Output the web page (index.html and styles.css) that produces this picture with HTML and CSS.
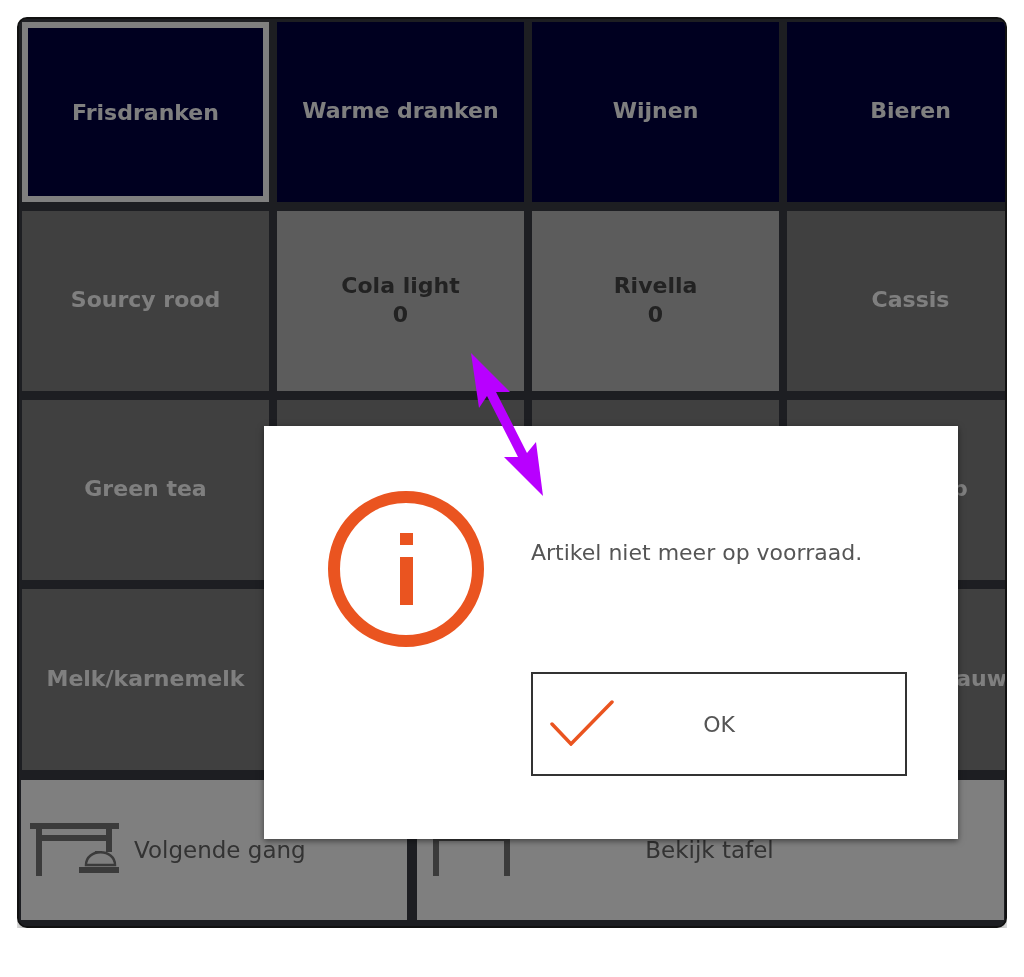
FILE: index.html
```html
<!DOCTYPE html>
<html lang="nl">
<head>
    <meta charset="UTF-8">
    <title>Kassa</title>
    <link rel="stylesheet" href="styles.css">
</head>
<body>
    <div class="frame">
        <div class="grid">
            <div class="cell category selected">Frisdranken</div>
            <div class="cell category">Warme dranken</div>
            <div class="cell category">Wijnen</div>
            <div class="cell category">Bieren</div>

            <div class="cell">Sourcy rood</div>
            <div class="cell active">Cola light<br>0</div>
            <div class="cell active">Rivella<br>0</div>
            <div class="cell">Cassis</div>

            <div class="cell">Green tea</div>
            <div class="cell"></div>
            <div class="cell"></div>
            <div class="cell">Appelsap</div>

            <div class="cell">Melk/karnemelk</div>
            <div class="cell"></div>
            <div class="cell"></div>
            <div class="cell">Spa rood/blauw</div>
        </div>
        <div class="actions">
            <div class="action action-next">
                <svg class="table-icon" viewBox="0 0 90 54">
                    <path d="M0 0h89v6H0zM6 6h6v47H6zM76 6h6v23h-6zM12 12h64v6H12z"/>
                    <path d="M65 28h7v2h-7z"/>
                    <path class="bell" d="M56 42c0-17 29-17 29 0z"/>
                    <path d="M49 44h40v6H49z"/>
                </svg>
                <span>Volgende gang</span>
            </div>
            <div class="action action-table">
                <svg class="table-icon" viewBox="0 0 90 54">
                    <path d="M0 0h89v6H0zM6 6h6v47H6zM77 6h6v47h-6zM6 12h77v6H6z"/>
                </svg>
                <span>Bekijk tafel</span>
                <span></span>
            </div>
        </div>
        <div class="overlay"></div>
    </div>

    <div class="dialog">
        <div class="dialog-icon">
            <svg class="info-icon" viewBox="0 0 156 156">
                <circle cx="78" cy="78" r="72" fill="none" stroke="#ea5420" stroke-width="12"/>
                <rect x="72" y="42" width="13" height="12" fill="#ea5420"/>
                <rect x="72" y="66" width="13" height="48" fill="#ea5420"/>
            </svg>
        </div>
        <div class="dialog-body">
            <p class="dialog-text">Artikel niet meer op voorraad.</p>
            <div class="ok-btn">
                <svg class="check-icon" viewBox="0 0 64 46">
                    <path d="M2 24 L21 44 L62 2" fill="none" stroke="#ea5420" stroke-width="3.5" stroke-linecap="round"/>
                </svg>
                <span>OK</span>
            </div>
        </div>
    </div>

    <svg class="arrow" viewBox="0 0 75 146">
        <polygon fill="#b800ff" points="1,1 40,40 26,40 57,101 66,90 73,144 34,105 48,105 17,44 9,56"/>
    </svg>
</body>
</html>
```

FILE: styles.css
```css
body {
    margin: 17px;
    background-color: #fff;
    font-family: "DejaVu Sans", sans-serif;
}
.frame {
    position: relative;
    box-sizing: border-box;
    width: 990px;
    height: 911px;
    padding: 3px 0 6px 3px;
    border: 2px solid #111;
    border-radius: 10px;
    background-color: #3a3c44;
    box-shadow: 0 24px 14px rgba(0, 0, 0, 0.3);
    overflow: hidden;
    filter: blur(0.4px);
}
.grid {
    display: grid;
    grid-template-columns: repeat(4, 247px);
    grid-template-rows: 180px 180px 180px 181px;
    column-gap: 8px;
    row-gap: 9px;
}
.cell {
    display: flex;
    align-items: center;
    justify-content: center;
    text-align: center;
    box-sizing: border-box;
    padding-bottom: 3px;
    background-color: #808080;
    color: #fff;
    font-size: 22px;
    font-weight: bold;
    line-height: 29px;
    white-space: nowrap;
}
.category {
    background-color: #000040;
}
.selected {
    border: 6px solid #fff;
    padding-bottom: 0;
}
.active {
    background-color: #b8b8b8;
    color: #444;
}
.actions {
    display: grid;
    grid-template-columns: 386px 587px;
    column-gap: 10px;
    height: 140px;
    margin: 10px 0 0 -1px;
}
.action {
    display: flex;
    align-items: center;
    background-color: #fff;
    color: #666;
    font-size: 23px;
}
.action-next {
    gap: 14px;
    padding-left: 9px;
}
.action-table {
    display: grid;
    grid-template-columns: 1fr auto 1fr;
    padding-left: 10px;
    padding-right: 12px;
}
.table-icon {
    width: 90px;
    height: 54px;
    fill: #777;
}
.bell {
    fill: none;
    stroke: #777;
    stroke-width: 2.5;
}
.overlay {
    position: absolute;
    top: 0;
    left: 0;
    right: 0;
    bottom: 0;
    background-color: rgba(0, 0, 0, 0.5);
}
.dialog {
    position: absolute;
    top: 426px;
    left: 264px;
    display: flex;
    box-sizing: border-box;
    width: 694px;
    height: 413px;
    padding: 65px 51px 0 64px;
    background-color: #fff;
    box-shadow: 0 2px 6px rgba(0, 0, 0, 0.5);
    filter: blur(0.3px);
}
.dialog-icon {
    width: 203px;
}
.info-icon {
    display: block;
    width: 156px;
    height: 156px;
}
.dialog-body {
    flex: 1;
}
.dialog-text {
    margin: 47px 0 104px;
    color: #555;
    font-size: 22px;
    line-height: 30px;
    white-space: nowrap;
}
.ok-btn {
    position: relative;
    display: flex;
    align-items: center;
    justify-content: center;
    box-sizing: border-box;
    width: 376px;
    height: 104px;
    border: 2px solid #333;
    color: #555;
    font-size: 22px;
}
.check-icon {
    position: absolute;
    left: 17px;
    top: 26px;
    width: 64px;
    height: 46px;
}
.arrow {
    position: absolute;
    top: 352px;
    left: 470px;
    width: 75px;
    height: 146px;
}
```
